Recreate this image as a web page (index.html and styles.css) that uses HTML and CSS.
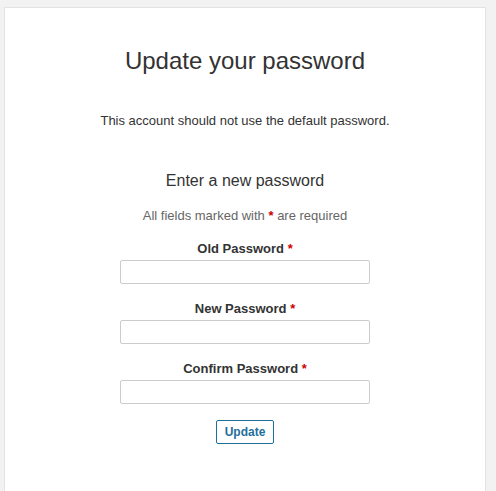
FILE: index.html
```html
<!DOCTYPE html>
<html>
<head>
<meta charset="utf-8">
<link rel="stylesheet" href="styles.css">
</head>
<body>
<div class="page">
  <div class="card">
    <h1 class="title">Update your password</h1>
    <p class="notice">This account should not use the default password.</p>
    <h2 class="subtitle">Enter a new password</h2>
    <p class="hint">All fields marked with <span class="req">*</span> are required</p>
    <form class="form">
      <div class="field">
        <label class="label">Old Password <span class="req">*</span></label>
        <input class="input" type="password">
      </div>
      <div class="field">
        <label class="label">New Password <span class="req">*</span></label>
        <input class="input" type="password">
      </div>
      <div class="field">
        <label class="label">Confirm Password <span class="req">*</span></label>
        <input class="input" type="password">
      </div>
      <button class="btn" type="button">Update</button>
    </form>
  </div>
</div>
</body>
</html>
```

FILE: styles.css
```css
html, body {
  margin: 0;
  padding: 0;
  height: 100%;
  overflow: hidden;
}
body {
  background: #f2f2f2;
  font-family: "Liberation Sans", Arial, sans-serif;
  color: #333;
}
.page {
  padding: 7px 10px 0 4px;
}
.card {
  background: #fff;
  border: 1px solid #e3e3e3;
  min-height: 600px;
  display: flex;
  flex-direction: column;
  align-items: center;
  box-sizing: border-box;
}
.title {
  font-size: 24px;
  font-weight: normal;
  margin: 39px 0 0;
  line-height: 28px;
  color: #333;
}
.notice {
  font-size: 13px;
  margin: 38px 0 0;
  line-height: 16px;
  color: #333;
}
.subtitle {
  font-size: 16px;
  font-weight: normal;
  margin: 42px 0 0;
  line-height: 20px;
  color: #333;
}
.hint {
  font-size: 13px;
  color: #666;
  margin: 17px 0 0;
  line-height: 16px;
}
.req {
  color: #c00;
  font-weight: bold;
}
.form {
  display: flex;
  flex-direction: column;
  align-items: center;
  margin-top: 16px;
}
.field {
  display: flex;
  flex-direction: column;
  align-items: center;
  gap: 2px;
  margin-bottom: 16px;
}
.label {
  font-size: 13px;
  font-weight: bold;
  line-height: 18px;
  color: #333;
}
.input {
  width: 250px;
  height: 24px;
  box-sizing: border-box;
  border: 1px solid #ccc;
  border-radius: 2px;
  margin: 0;
  padding: 2px 4px;
  background: #fff;
}
.btn {
  margin-top: 0;
  height: 24px;
  padding: 0 8px;
  background: #fff;
  border: 1px solid #1f6f9b;
  border-radius: 2px;
  color: #1f6f9b;
  font-family: "Liberation Sans", Arial, sans-serif;
  font-size: 12px;
  font-weight: bold;
}
```
